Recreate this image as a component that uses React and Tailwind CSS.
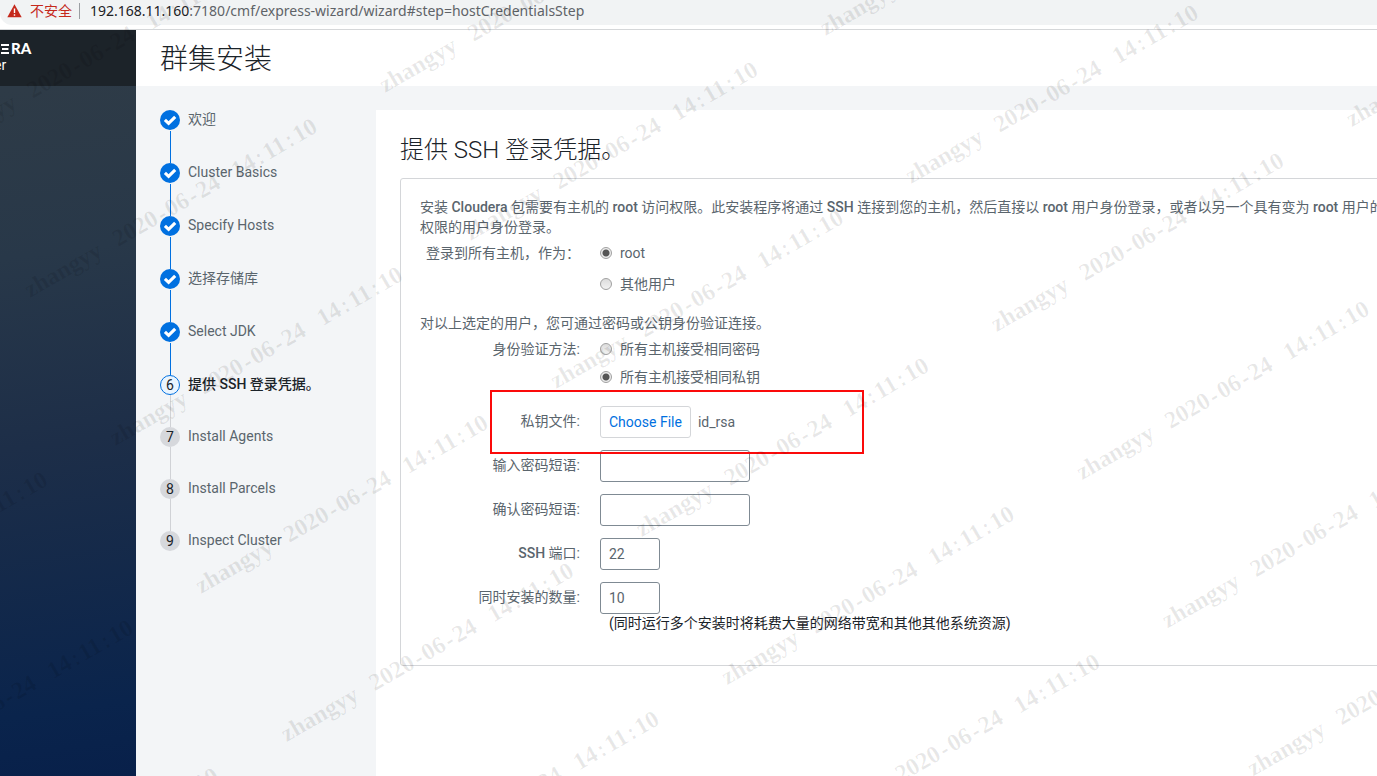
import React from "react";

const STEPS = [
  { label: "欢迎", state: "done" },
  { label: "Cluster Basics", state: "done" },
  { label: "Specify Hosts", state: "done" },
  { label: "选择存储库", state: "done" },
  { label: "Select JDK", state: "done" },
  { label: "提供 SSH 登录凭据。", state: "current" },
  { label: "Install Agents", state: "todo" },
  { label: "Install Parcels", state: "todo" },
  { label: "Inspect Cluster", state: "todo" },
];

function AddressBar() {
  return (
    <div className="border-b border-[#d5d7d9] bg-white pb-1">
      <div className="flex h-[25px] items-center overflow-hidden rounded-bl-xl bg-[#f1f3f4] pb-1 pl-[7px] text-[14px] whitespace-nowrap">
        <svg className="h-[14px] w-[15px] shrink-0" viewBox="0 0 15 14" aria-hidden="true">
          <path d="M7.5 0.3 L14.7 13.2 H0.3 Z" fill="#c5291c" />
          <path d="M6.8 4.6 h1.4 v4.4 h-1.4 z M6.8 10.2 h1.4 v1.6 h-1.4 z" fill="#fff" />
        </svg>
        <span className="ml-2 leading-5 text-[#c5291c]">不安全</span>
        <span className="ml-[7px] h-4 w-px bg-[#9b9fa3]" />
        <span className="ml-[10px] font-['Noto_Sans',sans-serif] leading-5 text-[#5f6368]">
          <span className="text-[#202124]">192.168.11.160</span>
          :7180/cmf/express-wizard/wizard#step=hostCredentialsStep
        </span>
      </div>
    </div>
  );
}

function SideNav() {
  return (
    <aside className="flex w-[136px] shrink-0 flex-col bg-[linear-gradient(172deg,#2e3b47_8%,#283849_30%,#1d2e48_55%,#0a244c_90%,#08204a_100%)]">
      <div className="flex h-14 flex-col bg-[#1c2329] pt-[11px] text-white">
        <div className="flex h-[15px] items-center pl-px">
          <svg className="h-[10px] w-[8px]" viewBox="0 0 8 10" aria-hidden="true">
            <path d="M0 1 H8 M1 5 H7.4 M0 9 H8" stroke="#fff" strokeWidth="1.8" />
          </svg>
          <span className="ml-[2px] font-[Lato,sans-serif] text-[15px] leading-[15px] font-black">RA</span>
        </div>
        <div className="-ml-[6px] text-[14px] leading-[18px]">er</div>
      </div>
    </aside>
  );
}

function StepMark({ state, number }) {
  if (state === "done") {
    return (
      <svg className="mb-px size-5" viewBox="0 0 20 20" aria-hidden="true">
        <circle cx="10" cy="10" r="10" fill="#0070e0" />
        <path d="M4.9 9.9 L8.6 13.4 L15.2 6.8" fill="none" stroke="#fff" strokeWidth="3.1" />
      </svg>
    );
  }
  const look =
    state === "current" ? "border border-[#0070e0] bg-[#eaf5ff]" : "bg-[#d6d8dc]";
  return (
    <span className={"flex size-5 items-center justify-center rounded-full text-[14px] leading-5 text-[#1b2329] " + look}>
      {number}
    </span>
  );
}

function Steps() {
  return (
    <ol className="w-[240px] shrink-0 p-6">
      {STEPS.map((s, i) => (
        <li key={s.label} className="flex gap-2">
          <div className="flex w-5 flex-col">
            <StepMark state={s.state} number={i + 1} />
            {i < STEPS.length - 1 && (
              <span className={"ml-[10px] h-8 w-px " + (s.state === "done" ? "bg-[#0070e0]" : "bg-[#d0d2d6]")} />
            )}
          </div>
          <span
            className={
              "text-[14px] leading-[18px] " +
              (s.state === "current" ? "font-medium text-[#1b2329]" : "text-[#5a656d]")
            }
          >
            {s.label}
          </span>
        </li>
      ))}
    </ol>
  );
}

function Radio({ id, name, label, checked }) {
  return (
    <div className="flex h-5 items-center gap-2">
      <input
        id={id}
        type="radio"
        name={name}
        defaultChecked={checked}
        className="size-3 appearance-none rounded-full border border-[#a0a0a0] bg-[linear-gradient(#dcdcdc,#f2f2f2)] checked:bg-[radial-gradient(circle,#555_0_3px,#ececec_4px)]"
      />
      <label htmlFor={id}>{label}</label>
    </div>
  );
}

const ROW = "grid grid-cols-[160px_minmax(0,1fr)] gap-x-5";

function Term({ children }) {
  return <span className="font-medium">{children}</span>;
}

function Field({ id, label, type, value, width }) {
  return (
    <div className={ROW}>
      <label htmlFor={id} className="pt-[5px] text-right leading-5">
        {label}
      </label>
      <input
        id={id}
        type={type}
        defaultValue={value}
        className={"h-8 rounded-[3px] border border-[#7f8a93] bg-white px-2 text-[14px] text-[#5a656d] " + width}
      />
    </div>
  );
}

function CredentialsForm() {
  return (
    <form className="-mr-14 rounded-[3px] border border-[#d4d6d9] px-[19px] pt-[18px] pb-8 text-[14px] leading-5 text-[#5a656d]">
      <p>
        安装 <Term>Cloudera</Term> 包需要有主机的 <Term>root</Term> 访问权限。此安装程序将通过 <Term>SSH</Term>{" "}
        连接到您的主机，然后直接以 <Term>root</Term> 用户身份登录，或者以另一个具有变为 <Term>root</Term>{" "}
        用户的权限的用户身份登录。
      </p>
      <div className={ROW + " mt-[6px]"} role="radiogroup" aria-labelledby="login-as">
        <span id="login-as" className="text-right">登录到所有主机，作为：</span>
        <div className="flex flex-col gap-[11px]">
          <Radio id="user-root" name="user" label="root" checked />
          <Radio id="user-other" name="user" label="其他用户" />
        </div>
      </div>
      <p className="mt-[19px]">对以上选定的用户，您可通过密码或公钥身份验证连接。</p>
      <div className={ROW + " mt-[6px]"} role="radiogroup" aria-labelledby="auth-method">
        <span id="auth-method" className="text-right">身份验证方法:</span>
        <div className="flex flex-col gap-2">
          <Radio id="auth-password" name="auth" label="所有主机接受相同密码" />
          <Radio id="auth-key" name="auth" label="所有主机接受相同私钥" checked />
        </div>
      </div>
      <div className="mt-[19px] flex flex-col gap-3">
        <div className={ROW + " relative"}>
          <label htmlFor="key-file" className="pt-[5px] text-right">私钥文件:</label>
          <div className="flex items-center gap-[7px]">
            <button
              id="key-file"
              type="button"
              className="h-8 rounded-[3px] border border-[#d4d6d9] bg-white px-2 text-[#0070e0]"
            >
              Choose File
            </button>
            <span>id_rsa</span>
          </div>
          <div className="pointer-events-none absolute -top-4 left-[70px] z-10 h-16 w-[374px] border-2 border-[#fb0a0a]" />
        </div>
        <Field id="pass" label="输入密码短语:" type="password" width="w-[150px]" />
        <Field id="pass-confirm" label="确认密码短语:" type="password" width="w-[150px]" />
        <Field id="ssh-port" label={<><Term>SSH</Term> 端口:</>} type="text" value="22" width="w-[60px]" />
        <Field id="parallel" label="同时安装的数量:" type="text" value="10" width="w-[60px]" />
      </div>
      <p className="pl-[189px] leading-[19px] text-[#1b2329]">(同时运行多个安装时将耗费大量的网络带宽和其他其他系统资源)</p>
    </form>
  );
}

function Mark({ children }) {
  return <span className="font-['Liberation_Mono',monospace] text-[20px]">{children}</span>;
}

/* Tiled user and time stamp laid diagonally across the whole window. */
function Watermark() {
  return (
    <div aria-hidden="true" className="pointer-events-none absolute inset-0 z-20 overflow-hidden">
      <div className="absolute top-0 left-0 origin-top-left -rotate-30">
        <div className="mt-[82px] -ml-[533px] grid auto-rows-[171px] grid-cols-[repeat(5,410px)] font-['Liberation_Serif',serif] text-[24px] leading-6 font-bold whitespace-nowrap text-black/9">
          {Array.from({ length: 40 }, (_, i) => (
            <div key={i} className="grid h-6 grid-cols-[102px_137px_auto]">
              <span>zhangyy</span>
              <span>
                2020<Mark>-</Mark>06<Mark>-</Mark>24
              </span>
              <span>
                14<Mark>:</Mark>11<Mark>:</Mark>10
              </span>
            </div>
          ))}
        </div>
      </div>
    </div>
  );
}

export default function App() {
  return (
    <div className="relative flex min-h-screen flex-col overflow-hidden bg-white font-[Roboto,'Noto_Sans_CJK_SC',sans-serif]">
      <AddressBar />
      <div className="flex flex-1">
        <SideNav />
        <div className="flex min-w-0 flex-1 flex-col">
          <header className="flex h-14 items-center bg-white px-6 pt-1">
            <h1 className="text-[28px] leading-8 font-light text-[#1b2329]">群集安装</h1>
          </header>
          <div className="flex flex-1 bg-[#f3f5f7]">
            <Steps />
            <main className="mt-6 min-w-0 flex-1 bg-white px-6 pt-6">
              <h2 className="mb-3 text-[24px] leading-8 font-light text-[#1b2329]">提供 SSH 登录凭据。</h2>
              <CredentialsForm />
            </main>
          </div>
        </div>
      </div>
      <Watermark />
    </div>
  );
}
